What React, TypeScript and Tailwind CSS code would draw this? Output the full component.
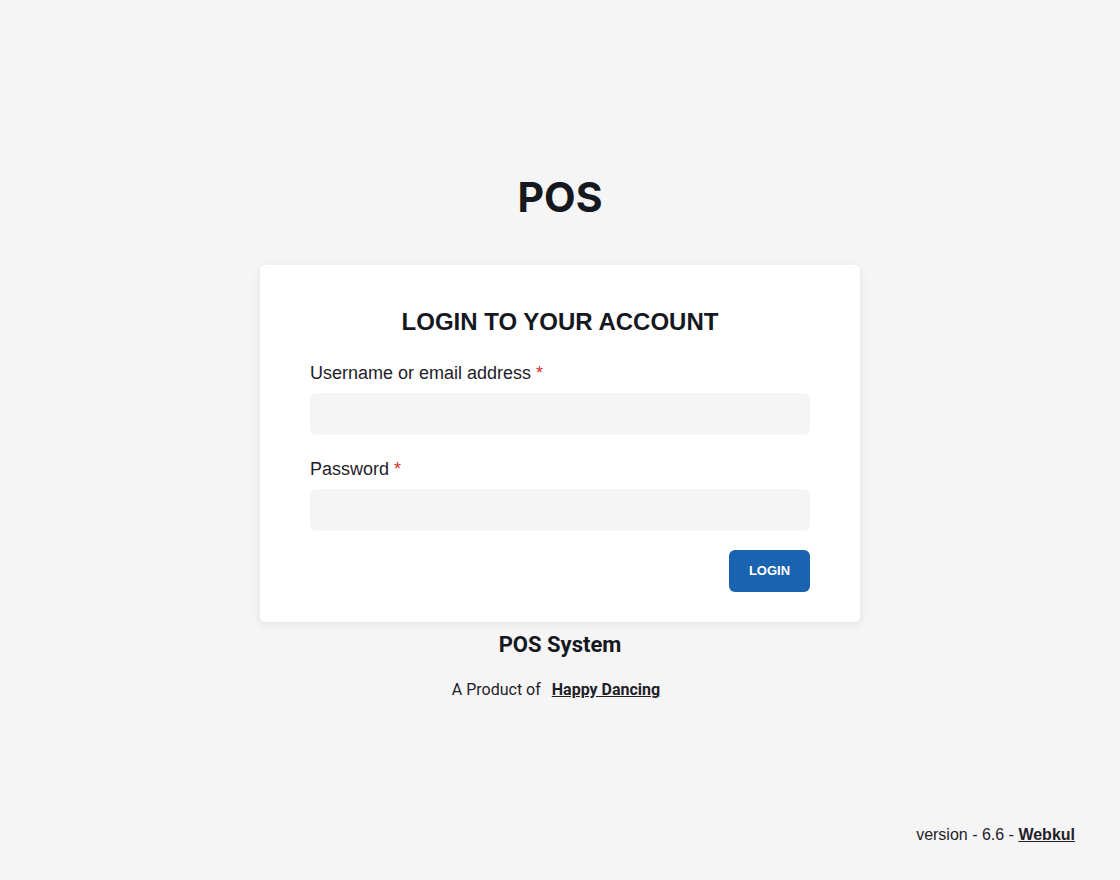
import React from 'react'

const Field = ({ label, type }: { label: string; type: string }) => (
  <div className="flex flex-col">
    <label className="text-[18px] leading-[22px] text-[#1f2129]">
      {label} <span className="text-[#d9302c]">*</span>
    </label>
    <input
      type={type}
      className="mt-[9px] h-[42px] w-full rounded-[6px] bg-[#f5f5f5] px-3 outline-none"
    />
  </div>
)

export default function App() {
  return (
    <div
      className="relative flex min-h-[880px] w-full flex-col items-center bg-[#f5f5f5] text-[#1f2129]"
      style={{ fontFamily: '"Liberation Sans", Arial, sans-serif' }}
    >
      <h1
        className="mt-[175px] text-[41px] font-bold leading-[44px] text-[#16181f]"
        style={{ fontFamily: 'Inter, sans-serif' }}
      >
        POS
      </h1>

      <div className="mt-[46px] w-[600px] rounded-[5px] bg-white px-[50px] pb-[30px] pt-[42px] shadow-[0_2px_10px_rgba(0,0,0,0.08)]">
        <h2 className="text-center text-[24px] font-bold leading-[30px] text-[#16181f]">
          LOGIN TO YOUR ACCOUNT
        </h2>
        <form className="mt-[25px] flex flex-col gap-[23px]">
          <Field label="Username or email address" type="text" />
          <Field label="Password" type="password" />
        </form>
        <div className="mt-[19px] flex justify-end">
          <button className="h-[42px] w-[81px] rounded-[6px] bg-[#1a63b0] text-[13px] font-bold text-white">
            LOGIN
          </button>
        </div>
      </div>

      <div
        className="mt-[10px] flex flex-col items-center"
        style={{ fontFamily: 'Roboto, sans-serif' }}
      >
        <p className="text-[22px] font-bold leading-[26px] text-[#16181f]">POS System</p>
        <p className="mt-[22px] pr-[8px] text-[16px] leading-[20px] text-[#1f2129]">
          A Product of{' '}
          <a href="#" className="ml-[7px] font-bold underline">
            Happy Dancing
          </a>
        </p>
      </div>

      <div className="absolute bottom-[35px] right-[45px] text-[16px] leading-[20px] text-[#1f2129]">
        version - 6.6 -{' '}
        <a href="#" className="font-bold underline">
          Webkul
        </a>
      </div>
    </div>
  )
}
